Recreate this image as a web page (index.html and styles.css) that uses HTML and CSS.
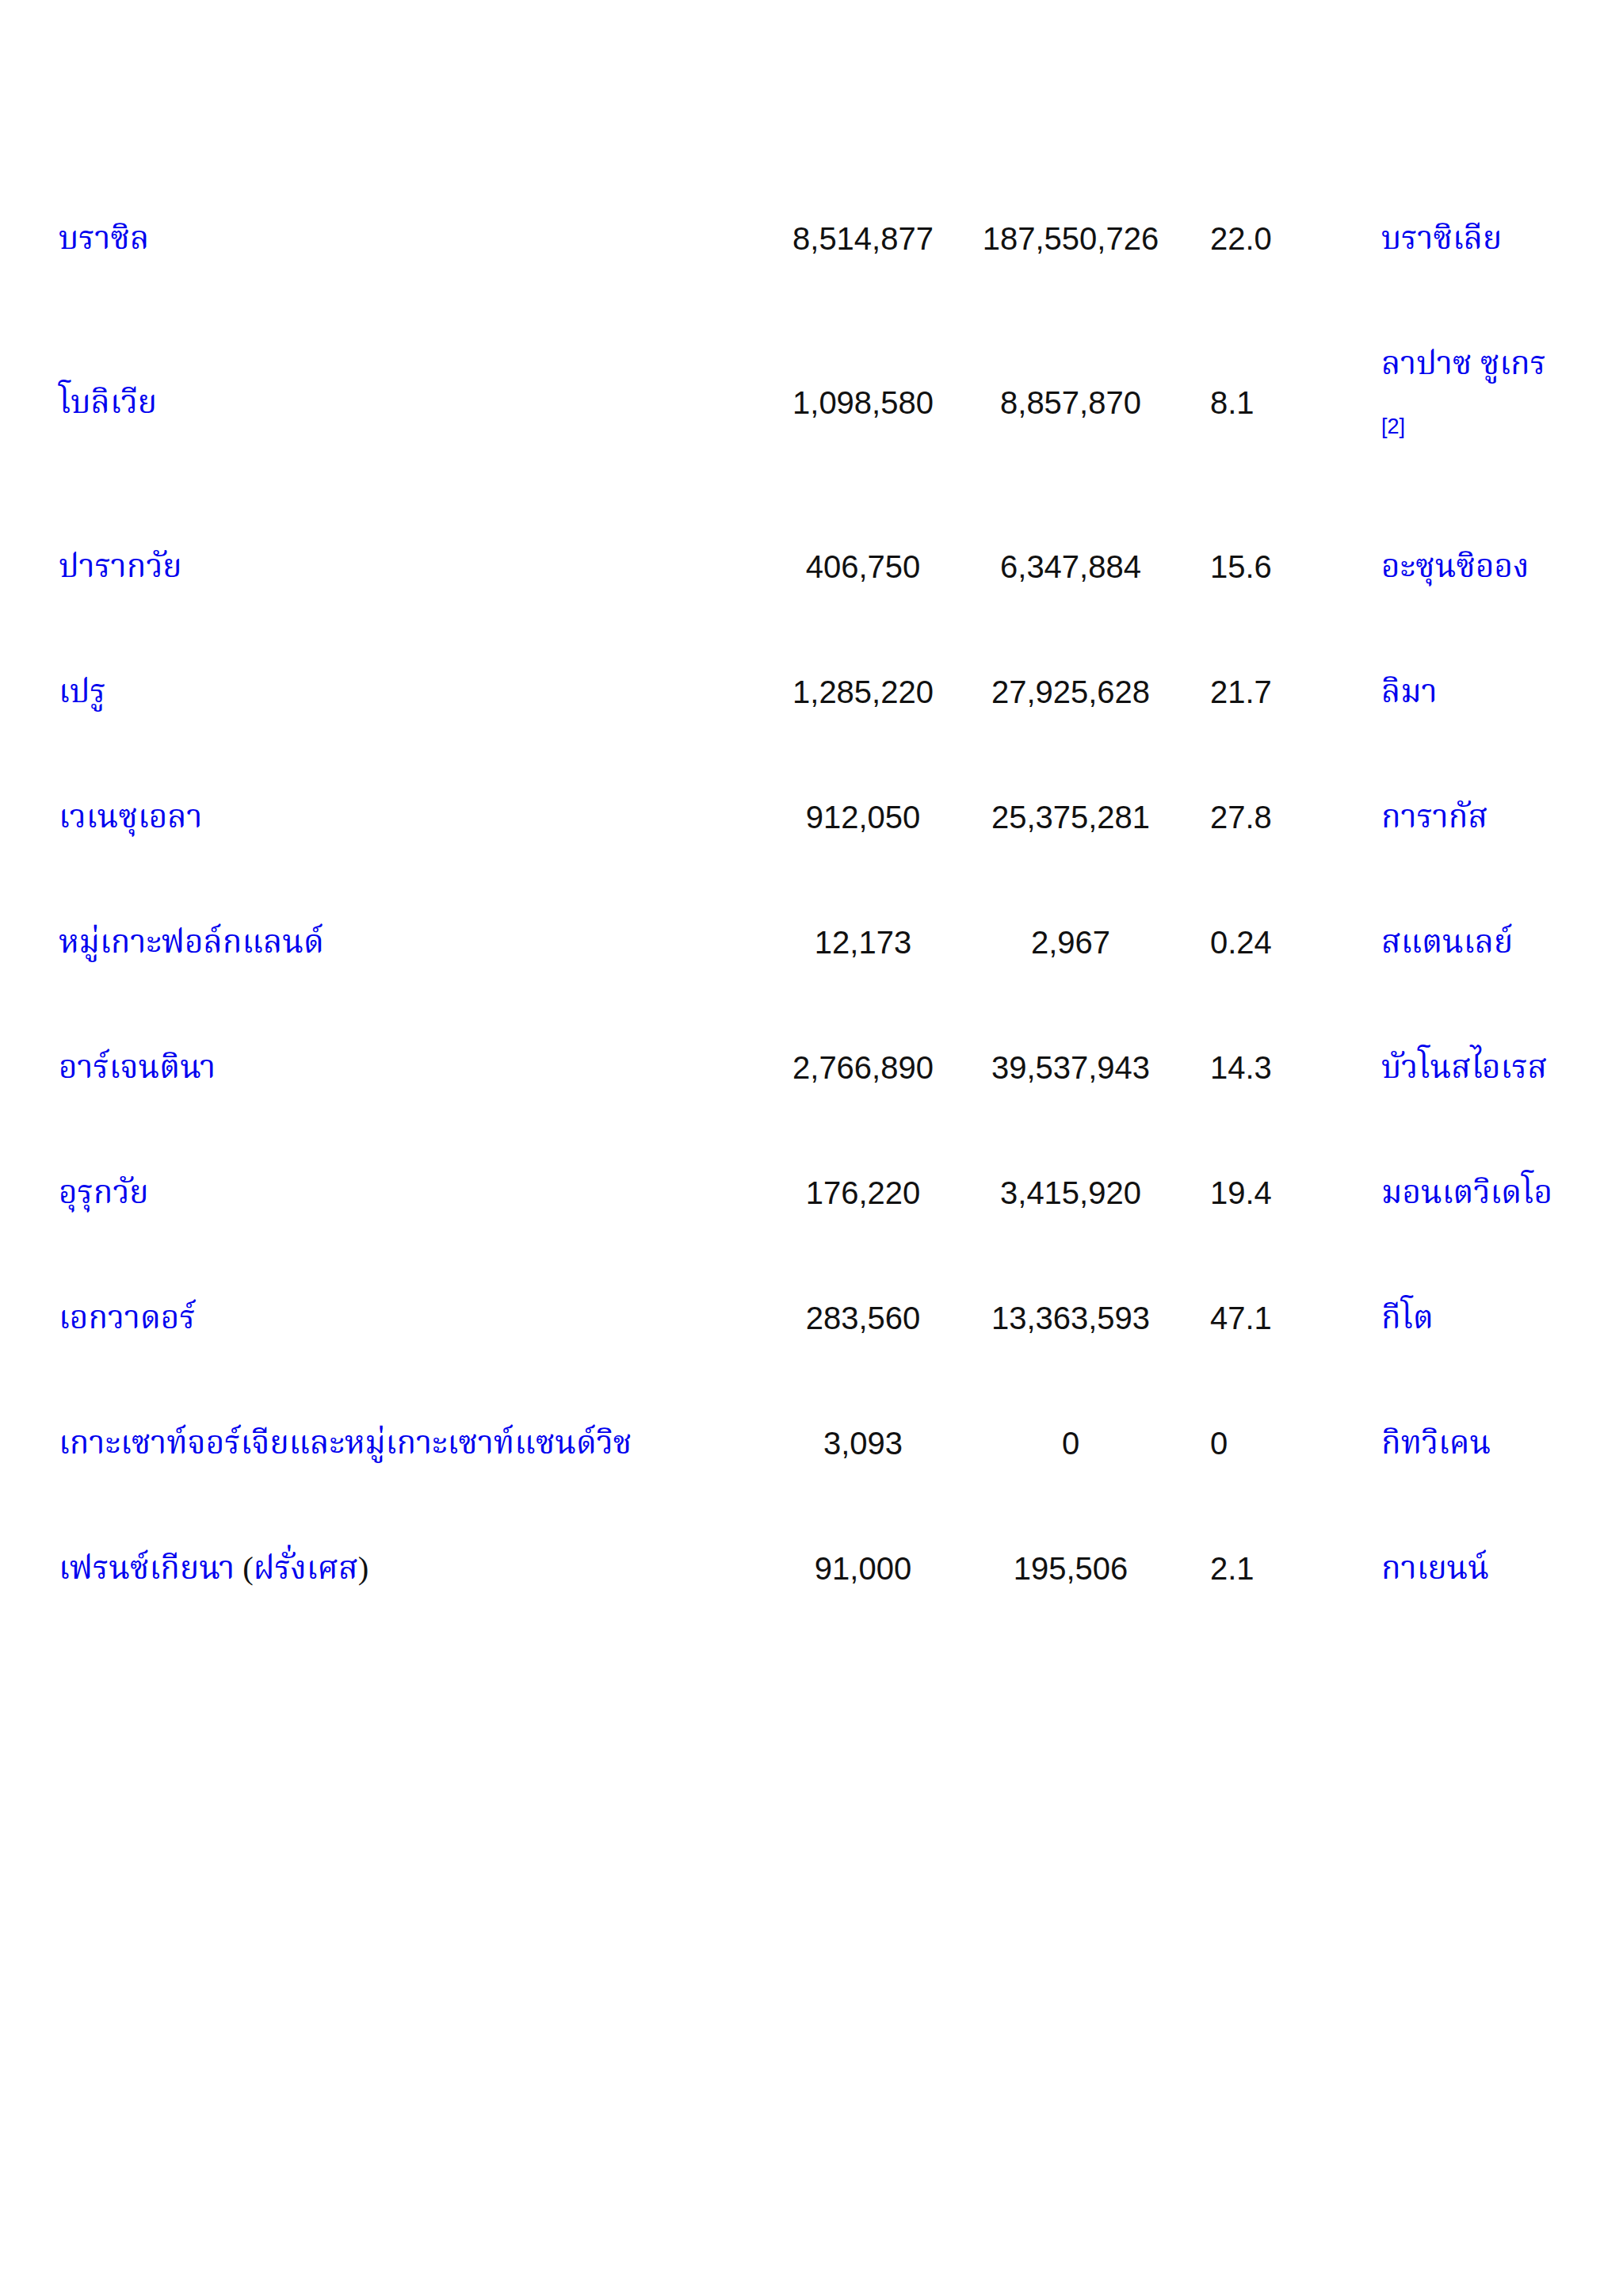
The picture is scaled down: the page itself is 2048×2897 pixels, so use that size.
FILE: index.html
```html
<!DOCTYPE html>
<html lang="th">
<head>
<meta charset="utf-8">
<link rel="stylesheet" href="styles.css">
<title>ประเทศในอเมริกาใต้</title>
</head>
<body>
<div class="table">
  <div class="row">
    <div class="cell name"><a href="#">บราซิล</a></div>
    <div class="cell num">8,514,877</div>
    <div class="cell num">187,550,726</div>
    <div class="cell dens">22.0</div>
    <div class="cell cap"><a href="#">บราซิเลีย</a></div>
  </div>
  <div class="row">
    <div class="cell name"><a href="#">โบลิเวีย</a></div>
    <div class="cell num">1,098,580</div>
    <div class="cell num">8,857,870</div>
    <div class="cell dens">8.1</div>
    <div class="cell cap"><a href="#">ลาปาซ</a> <a href="#">ซูเกร</a><sup class="ref"><a href="#">[2]</a></sup></div>
  </div>
  <div class="row">
    <div class="cell name"><a href="#">ปารากวัย</a></div>
    <div class="cell num">406,750</div>
    <div class="cell num">6,347,884</div>
    <div class="cell dens">15.6</div>
    <div class="cell cap"><a href="#">อะซุนซิออง</a></div>
  </div>
  <div class="row">
    <div class="cell name"><a href="#">เปรู</a></div>
    <div class="cell num">1,285,220</div>
    <div class="cell num">27,925,628</div>
    <div class="cell dens">21.7</div>
    <div class="cell cap"><a href="#">ลิมา</a></div>
  </div>
  <div class="row">
    <div class="cell name"><a href="#">เวเนซุเอลา</a></div>
    <div class="cell num">912,050</div>
    <div class="cell num">25,375,281</div>
    <div class="cell dens">27.8</div>
    <div class="cell cap"><a href="#">การากัส</a></div>
  </div>
  <div class="row">
    <div class="cell name"><a href="#">หมู่เกาะฟอล์กแลนด์</a></div>
    <div class="cell num">12,173</div>
    <div class="cell num">2,967</div>
    <div class="cell dens">0.24</div>
    <div class="cell cap"><a href="#">สแตนเลย์</a></div>
  </div>
  <div class="row">
    <div class="cell name"><a href="#">อาร์เจนตินา</a></div>
    <div class="cell num">2,766,890</div>
    <div class="cell num">39,537,943</div>
    <div class="cell dens">14.3</div>
    <div class="cell cap"><a href="#">บัวโนสไอเรส</a></div>
  </div>
  <div class="row">
    <div class="cell name"><a href="#">อุรุกวัย</a></div>
    <div class="cell num">176,220</div>
    <div class="cell num">3,415,920</div>
    <div class="cell dens">19.4</div>
    <div class="cell cap"><a href="#">มอนเตวิเดโอ</a></div>
  </div>
  <div class="row">
    <div class="cell name"><a href="#">เอกวาดอร์</a></div>
    <div class="cell num">283,560</div>
    <div class="cell num">13,363,593</div>
    <div class="cell dens">47.1</div>
    <div class="cell cap"><a href="#">กีโต</a></div>
  </div>
  <div class="row">
    <div class="cell name"><a href="#">เกาะเซาท์จอร์เจียและหมู่เกาะเซาท์แซนด์วิช</a></div>
    <div class="cell num">3,093</div>
    <div class="cell num">0</div>
    <div class="cell dens">0</div>
    <div class="cell cap"><a href="#">กิทวิเคน</a></div>
  </div>
  <div class="row">
    <div class="cell name"><a href="#">เฟรนซ์เกียนา</a> (<a href="#">ฝรั่งเศส</a>)</div>
    <div class="cell num">91,000</div>
    <div class="cell num">195,506</div>
    <div class="cell dens">2.1</div>
    <div class="cell cap"><a href="#">กาเยนน์</a></div>
  </div>
</div>
</body>
</html>
```

FILE: styles.css
```css
html, body {
  margin: 0;
  padding: 0;
  background: #ffffff;
}

body {
  width: 2048px;
  min-height: 2897px;
  font-family: "Liberation Sans", Arial, sans-serif;
  font-size: 40px;
  color: #111111;
}

.table {
  padding-top: 222px;
  padding-left: 58px;
}

.row {
  display: grid;
  grid-template-columns: 902px 258px 266px 243px 321px;
  align-items: center;
}

.cell {
  padding: 49px 16px;
  line-height: 60px;
}

.name,
.cap {
  font-family: "Liberation Serif", "Noto Serif Thai", "Norasi", "Garuda", "Loma", "Waree", "Kinnari", serif;
  font-size: 40.5px;
}

.num {
  text-align: center;
  padding-left: 0;
  padding-right: 0;
}

.dens {
  padding-left: 43px;
}

a {
  color: #0000ee;
  text-decoration: none;
}

.ref {
  display: block;
  font-family: "Liberation Sans", Arial, sans-serif;
  font-size: 27px;
  line-height: 98px;
  vertical-align: baseline;
}
```
